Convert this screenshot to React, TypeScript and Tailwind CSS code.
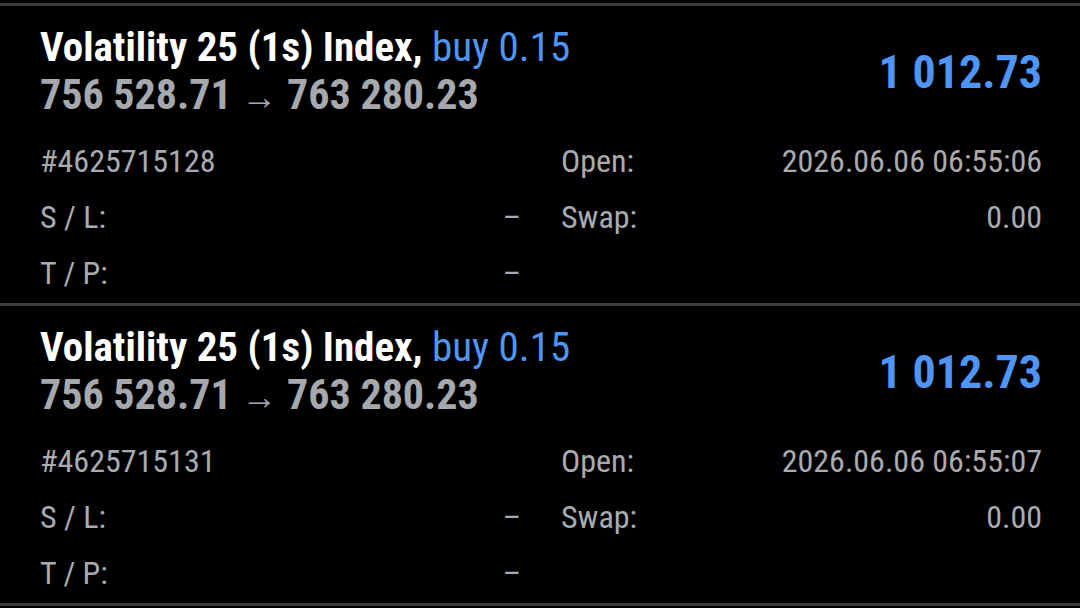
type Position = {
  ticket: string;
  open: string;
};

const positions: Position[] = [
  { ticket: '#4625715128', open: '2026.06.06 06:55:06' },
  { ticket: '#4625715131', open: '2026.06.06 06:55:07' },
];

const font = 'font-["Roboto_Condensed",Roboto,sans-serif]';

function PositionCard({ p }: { p: Position }) {
  return (
    <div className="border-b-[3px] border-[#3b3c41] pl-[40px] pr-[38px] pt-[17px] pb-[2px]">
      {/* header */}
      <div className="flex items-center justify-between">
        <div>
          <div className="text-[41px] leading-[48px] font-bold text-white">
            Volatility 25 (1s) Index, <span className="font-normal text-[#4f95f5]">buy 0.15</span>
          </div>
          <div className="text-[42px] leading-[48px] font-bold text-[#a5a8ad]">
            756 528.71 <span className="font-normal text-[36px]">→</span> 763 280.23
          </div>
        </div>
        <div className="text-[46px] font-bold text-[#4f95f5]">1 012.73</div>
      </div>

      {/* details */}
      <div className="mt-[12px] grid grid-cols-2 gap-x-[40px] text-[32px] text-[#a9abb0]">
        <div className="flex h-[56px] items-center justify-between">
          <span>{p.ticket}</span>
        </div>
        <div className="flex h-[56px] items-center justify-between">
          <span>Open:</span>
          <span>{p.open}</span>
        </div>
        <div className="flex h-[56px] items-center justify-between">
          <span>S / L:</span>
          <span>–</span>
        </div>
        <div className="flex h-[56px] items-center justify-between">
          <span>Swap:</span>
          <span>0.00</span>
        </div>
        <div className="flex h-[56px] items-center justify-between">
          <span>T / P:</span>
          <span>–</span>
        </div>
        <div className="h-[56px]" />
      </div>
    </div>
  );
}

export default function App() {
  return (
    <div className={`min-h-[608px] bg-black ${font}`}>
      <div className="h-[3px] bg-black" />
      <div className="border-t-[3px] border-[#3b3c41]">
        {positions.map(p => (
          <PositionCard key={p.ticket} p={p} />
        ))}
      </div>
    </div>
  );
}
